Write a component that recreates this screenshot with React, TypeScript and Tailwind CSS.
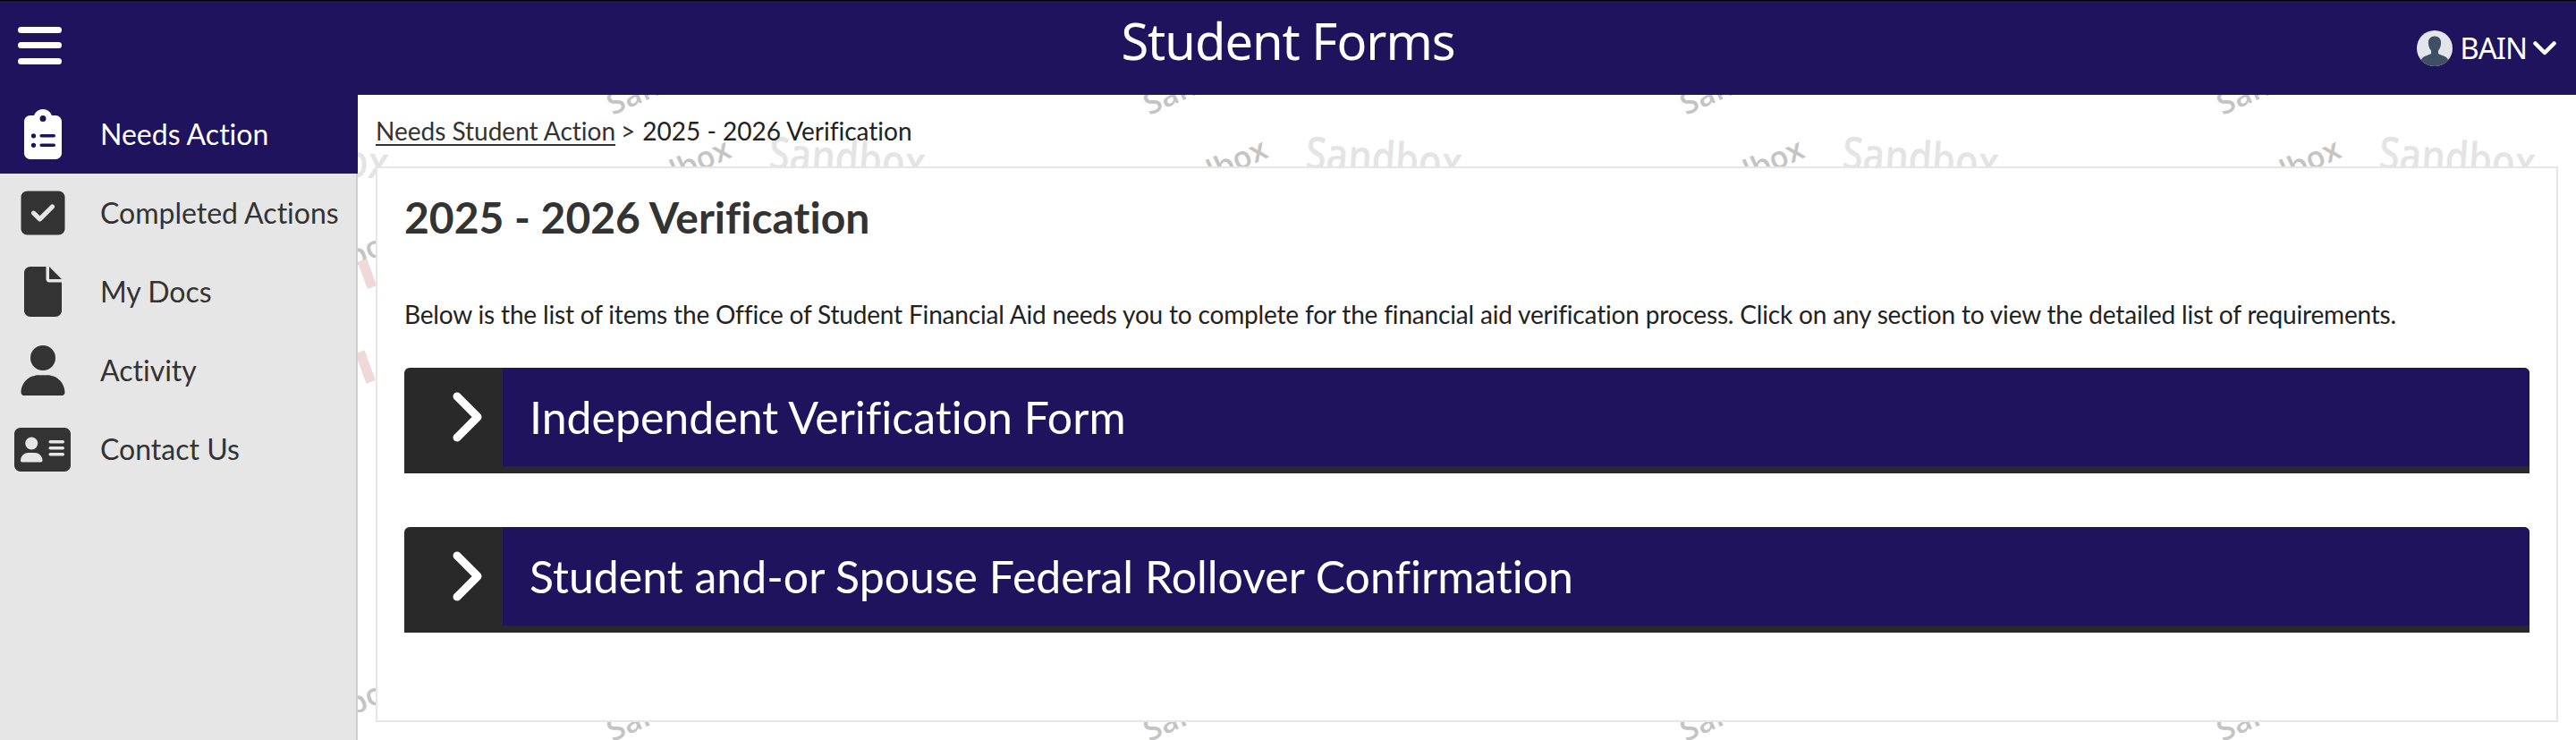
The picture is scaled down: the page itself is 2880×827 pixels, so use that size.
import { FaAddressCard, FaClipboardList, FaFile, FaSquareCheck, FaUser } from "react-icons/fa6";
import type { IconType } from "react-icons";

const navItems: { label: string; icon: IconType; size?: number; active?: boolean }[] = [
  { label: "Needs Action", icon: FaClipboardList, active: true },
  { label: "Completed Actions", icon: FaSquareCheck },
  { label: "My Docs", icon: FaFile },
  { label: "Activity", icon: FaUser },
  { label: "Contact Us", icon: FaAddressCard, size: 63 },
];

const sections = ["Independent Verification Form", "Student and-or Spouse Federal Rollover Confirmation"];

// watermark tile positions, relative to the main area
const flatMarks = [-140, 460, 1060, 1660, 2260];
const tiltedMarks = [
  { x: 280, y: -14 },
  { x: 880, y: -14 },
  { x: 1480, y: -14 },
  { x: 2080, y: -14 },
  { x: 280, y: 686 },
  { x: 880, y: 686 },
  { x: 1480, y: 686 },
  { x: 2080, y: 686 },
  { x: 285, y: 90 },
  { x: 885, y: 90 },
  { x: 1485, y: 90 },
  { x: 2085, y: 90 },
  { x: -85, y: 190 },
  { x: -85, y: 690 },
];

function Avatar() {
  return (
    <svg width="40" height="40" viewBox="0 0 40 40" className="shrink-0">
      <defs>
        <clipPath id="avatar-clip">
          <circle cx="20" cy="20" r="20" />
        </clipPath>
      </defs>
      <circle cx="20" cy="20" r="20" fill="#e2e5e9" />
      <g clipPath="url(#avatar-clip)" fill="#3f5064">
        <path d="M20 6.500c-5 0-7.500 3.500-7 8.500.3 3 1.300 5.500 3 7.500v3.500c-3.500 2-9 2.500-11 6.500v9h30v-9c-2-4-7.500-4.500-11-6.500v-3.500c1.700-2 2.700-4.500 3-7.500.5-5-2-8.500-7-8.500z" />
      </g>
    </svg>
  );
}

function Header() {
  return (
    <header className="relative flex h-[106px] items-center justify-between border-t border-black bg-[#20135e] pl-5 pr-[22px] text-white">
      <svg width="49" height="44" viewBox="0 0 49 44" className="mb-1">
        <rect x="0" y="0" width="49" height="7" rx="3.500" fill="white" />
        <rect x="0" y="17" width="49" height="7" rx="3.500" fill="white" />
        <rect x="0" y="35" width="49" height="7" rx="3.500" fill="white" />
      </svg>
      <h1 className="absolute left-0 right-0 top-[6px] text-center font-['Noto_Sans',sans-serif] text-[56px] leading-[76px] tracking-[-1px]">
        Student Forms
      </h1>
      <div className="flex items-center">
        <Avatar />
        <span className="ml-2 font-['Noto_Sans',sans-serif] text-[33px] leading-none tracking-[-1px]">BAIN</span>
        <svg width="26" height="16" viewBox="0 0 26 16" fill="none" className="ml-[7px]">
          <path d="M2.500 2.500 13 13 23.500 2.500" stroke="white" strokeWidth="4.500" strokeLinecap="round" strokeLinejoin="round" />
        </svg>
      </div>
    </header>
  );
}

function Sidebar() {
  return (
    <nav className="w-[400px] shrink-0 border-r-2 border-[#d0d0d0] bg-[#e6e6e6]">
      {navItems.map(({ label, icon: Icon, size, active }) => (
        <div
          key={label}
          className={`flex h-[88px] items-center ${active ? "-mr-0.5 bg-[#20135e] text-white" : "text-[#333333]"}`}
        >
          <span className="flex w-[95px] shrink-0 justify-center">
            <Icon size={size ?? 56} />
          </span>
          <span className="ml-[17px] text-[32px]">{label}</span>
        </div>
      ))}
    </nav>
  );
}

function SectionBar({ title }: { title: string }) {
  return (
    <div className="flex h-[118px] rounded-t-md bg-[#292929] pb-2">
      <span className="flex w-[110px] shrink-0 items-center justify-center pl-[31px]">
        <svg width="38" height="60" viewBox="0 0 38 60" fill="none">
          <path d="M7 7l23 23-23 23" stroke="white" strokeWidth="9" strokeLinecap="round" strokeLinejoin="round" />
        </svg>
      </span>
      <div className="flex flex-1 items-center rounded-tr-md bg-[#20135e] pl-[30px] text-[50px] text-white">{title}</div>
    </div>
  );
}

function Watermarks() {
  return (
    <div className="absolute inset-0 overflow-hidden font-['Open_Sans',sans-serif] font-semibold">
      {flatMarks.map((x) => (
        <span
          key={x}
          className="absolute top-[37px] rotate-[4deg] scale-y-[1.2] text-[42px] text-[#e4e4e4]"
          style={{ left: x }}
        >
          Sandbox
        </span>
      ))}
      {tiltedMarks.map(({ x, y }) => (
        <span
          key={`${x}-${y}`}
          className="absolute origin-left rotate-[-24deg] text-[34px] text-[#c4c4c4]"
          style={{ left: x, top: y }}
        >
          Sandbox
        </span>
      ))}
      <div className="absolute left-[5px] top-[184px] h-[32px] w-[11px] rotate-[-20deg] bg-[#f0d8d8]" />
      <div className="absolute left-[3px] top-[286px] h-[36px] w-[11px] rotate-[-20deg] bg-[#f0d8d8]" />
    </div>
  );
}

export default function App() {
  return (
    <div className="flex h-[827px] w-[2880px] flex-col overflow-hidden bg-white font-['Lato',sans-serif] text-[#333333] [font-variant-ligatures:no-common-ligatures]">
      <Header />
      <div className="flex flex-1 overflow-hidden">
        <Sidebar />
        <main className="relative flex-1 overflow-hidden bg-white">
          <Watermarks />
          <div className="relative flex h-full flex-col px-5 pb-5">
            <div className="flex h-[80px] items-start pt-[20px] text-[28px] leading-[40px]">
              <a className="underline underline-offset-4">Needs Student Action</a>
              <span className="ml-1.5">&gt;</span>
              <span className="ml-2 text-[#222222]">2025 - 2026 Verification</span>
            </div>
            <section className="flex-1 border-2 border-[#e6e6e6] bg-white px-[30px]">
              <h2 className="mt-[25px] text-[48px] font-bold leading-[60px]">2025 - 2026 Verification</h2>
              <p className="mt-[58px] text-[28px] leading-[40px] tracking-[-0.17px] text-[#222222]">
                Below is the list of items the Office of Student Financial Aid needs you to complete for the financial
                aid verification process. Click on any section to view the detailed list of requirements.
              </p>
              <div className="mt-[40px] flex flex-col gap-[60px]">
                {sections.map((s) => (
                  <SectionBar key={s} title={s} />
                ))}
              </div>
            </section>
          </div>
        </main>
      </div>
    </div>
  );
}
